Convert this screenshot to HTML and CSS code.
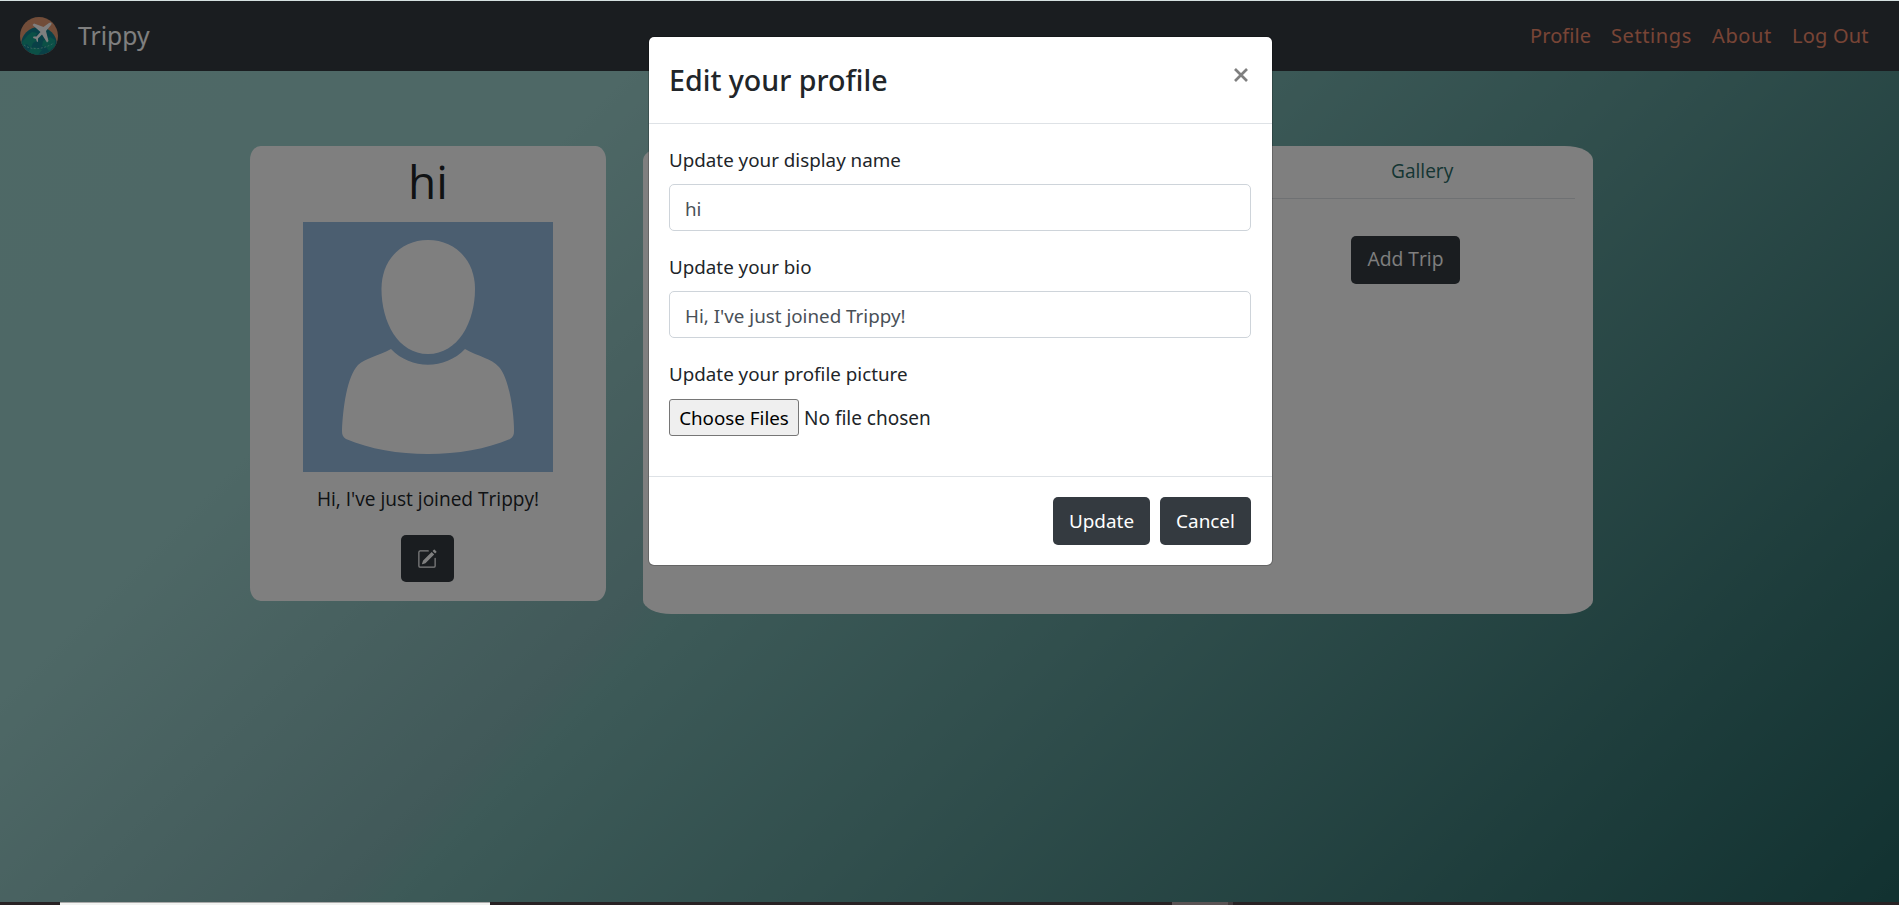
FILE: index.html
```html
<!DOCTYPE html>
<html lang="en">
<head>
<meta charset="utf-8">
<title>Trippy</title>
<link rel="stylesheet" href="styles.css">
</head>
<body>
<div class="page">
  <nav class="navbar">
    <svg class="logo" viewBox="0 0 38 38">
      <defs><clipPath id="disc"><circle cx="19" cy="19" r="19"/></clipPath></defs>
      <g clip-path="url(#disc)">
        <rect width="38" height="38" fill="#e49a72"/>
        <circle cx="19" cy="28" r="18" fill="#12808f"/>
        <path d="M8 18l4-3 5 1-2 4 3 3-5 3-2 5-4-4-4 2-1-4z" fill="#16a08c"/>
        <path d="M23 24l7-4 5 3v6l-6 5-3-4-4-1zM9 33l5-3 8 3-4 5h-7z" fill="#16a08c"/>
        <path d="M4 28c8 6 20 4 30-2" fill="none" stroke="#6cc6bc" stroke-width="1" stroke-dasharray="2 1.5"/>
        <path d="M29 6c2-1.500 3.500 0 2 2l-5 6 2.500 10-1.500 1.500-5-8-4 4v3l-1 .5-1-3-3-1 .5-1.500h3l4-4.500-8-7 1.500-1.500 9.500 3.500z" fill="#fff"/>
      </g>
    </svg>
    <span class="brand">Trippy</span>
    <div class="links">
      <a class="l1">Profile</a><a class="l2">Settings</a><a class="l3">About</a><a class="l4">Log Out</a>
    </div>
  </nav>
  <main class="content">
    <section class="profile">
      <h1 class="name">hi</h1>
      <svg class="avatar" viewBox="0 0 250 250">
        <rect width="250" height="250" fill="#97bce1"/>
        <path d="M125 18C152 18 172 38 172 67C172 100 155 132 125 132C95 132 78.500 100 78.500 67C78.500 38 98 18 125 18Z" fill="#fff"/>
        <path d="M88 127C108 148 142 148 162 127C176 135 188 136 196 145C206 156 211 190 211 209C211 213 210 215 207 217C160 237 90 237 43 217C40 215 39 213 39 209C40 185 44 155 55 143C63 136 75 134 88 127Z" fill="#fff"/>
      </svg>
      <p class="bio">Hi, I've just joined Trippy!</p>
      <button class="btn edit">
        <svg width="20" height="20" viewBox="0 0 16 16" fill="#fff"><path d="M15.502 1.940a.5.5 0 0 1 0 .706L14.459 3.690l-2-2L13.502.646a.5.5 0 0 1 .707 0l1.293 1.293zm-1.750 2.456l-2-2L4.939 9.210a.5.5 0 0 0-.121.196l-.805 2.414a.25.25 0 0 0 .316.316l2.414-.805a.5.5 0 0 0 .196-.120l6.813-6.814z"/><path fill-rule="evenodd" d="M1 13.500A1.500 1.500 0 0 0 2.500 15h11a1.500 1.500 0 0 0 1.500-1.500v-6a.5.5 0 0 0-1 0v6a.5.5 0 0 1-.5.5h-11a.5.5 0 0 1-.5-.5v-11a.5.5 0 0 1 .5-.5H9a.5.5 0 0 0 0-1H2.500A1.500 1.500 0 0 0 1 2.500v11z"/></svg>
      </button>
    </section>
    <section class="gallery">
      <div class="tabs"><a class="tab">Gallery</a></div>
      <button class="btn add">Add Trip</button>
    </section>
  </main>
  <div class="backdrop"></div>
  <div class="modal">
    <header class="modal-head">
      <h2 class="modal-title">Edit your profile</h2>
      <svg class="close" viewBox="0 0 14 14"><path d="M1 1l12 12M13 1L1 13" stroke="#7f7f7f" stroke-width="2.700"/></svg>
    </header>
    <div class="modal-body">
      <label>Update your display name</label>
      <div class="field">hi</div>
      <label>Update your bio</label>
      <div class="field">Hi, I've just joined Trippy!</div>
      <label>Update your profile picture</label>
      <div class="file"><span class="choose">Choose Files</span><span class="nofile">No file chosen</span></div>
    </div>
    <footer class="modal-foot">
      <button class="btn update">Update</button>
      <button class="btn cancel">Cancel</button>
    </footer>
  </div>
</div>
<div class="taskbar"><span class="task-white"></span><span class="task-gray"></span></div>
</body>
</html>
```
FILE: styles.css
```css
* { box-sizing: border-box; }
body { margin: 0; height: 905px; overflow: hidden; display: flex; flex-direction: column; font: 18.8px/30px "Noto Sans", sans-serif; color: #212529; }
h1, h2, p { margin: 0; }
.page { position: relative; height: 902px; border-top: 1px solid #d5e0e0; background: linear-gradient(135deg, #9cd2cd 0%, #9cd0cc 25%, #83b3b3 44%, #7ab4b0 46%, #246462 100%); }
.navbar { height: 70px; background: #343a40; display: flex; align-items: center; padding: 0 30px 0 20px; }
.logo { width: 38px; height: 38px; }
.brand { font: 24.7px/38px "Noto Sans", sans-serif; color: #fff; margin-left: 20px; }
.links { margin-left: auto; display: flex; gap: 20px; font: 20px/30px "Noto Sans", sans-serif; color: #f08a6c; }
.links a { white-space: nowrap; }
.l1 { width: 61px; letter-spacing: .1px; }
.l2 { width: 81px; letter-spacing: .6px; }
.l3 { width: 60px; letter-spacing: .6px; }
.l4 { width: 77px; letter-spacing: .2px; }
.content { display: flex; align-items: flex-start; gap: 37px; padding: 75px 0 0 250px; }
.profile { width: 356px; height: 455px; border-radius: 3%; background: #fff; display: flex; flex-direction: column; align-items: center; }
.name { font: 400 46px/60px "Open Sans", sans-serif; margin-top: 5px; height: 71px; }
.avatar { width: 250px; height: 250px; }
.bio { font: 19.1px/30px "Open Sans", sans-serif; margin-top: 12px; white-space: nowrap; }
.btn { border: 0; border-radius: 5px; background: #343a40; color: #fff; height: 48px; padding: 0; font: 18.9px/30px "Noto Sans", sans-serif; white-space: nowrap; }
.edit { width: 53px; height: 47px; margin: 21px 2px 0 0; display: flex; align-items: center; justify-content: center; }
.gallery { width: 950px; height: 468px; border-radius: 3%; background: #fff; padding: 0 18px; display: flex; flex-direction: column; }
.tabs { height: 53px; border-bottom: 1px solid #dee2e6; display: flex; justify-content: flex-end; padding: 10px 122px 0 0; }
.tab { color: #2a6b66; font: 19.1px/30px "Open Sans", sans-serif; width: 62px; white-space: nowrap; }
.add { width: 109px; margin: 37px 115px 0 auto; font: 19.3px/30px "Open Sans", sans-serif; padding-bottom: 2px; }
.backdrop { position: absolute; inset: 0; background: rgba(0,0,0,.5); }
.modal { position: absolute; left: 648px; top: 35px; width: 625px; height: 530px; border: 1px solid rgba(0,0,0,.2); background: #fff; background-clip: padding-box; border-radius: 6px; }
.modal-head { height: 87px; border-bottom: 1px solid #dee2e6; display: flex; justify-content: space-between; padding: 24px 24px 0 20px; }
.modal-title { font: 500 28.6px/38px "Noto Sans", sans-serif; white-space: nowrap; }
.close { width: 14px; height: 14px; margin-top: 7px; }
.modal-body { height: 353px; padding: 21px 21px 0 20px; border-bottom: 1px solid #dee2e6; display: flex; flex-direction: column; align-items: stretch; }
.modal-body label { height: 39px; white-space: nowrap; }
.field { height: 47px; margin-bottom: 21px; border: 1px solid #ced4da; border-radius: 5px; padding: 9px 15px 0; line-height: 30px; color: #495057; }
.file { display: flex; align-items: center; gap: 5px; height: 37px; margin-top: 1px; }
.choose { width: 130px; height: 37px; border: 1px solid #767676; border-radius: 3px; background: #efefef; color: #000; line-height: 37px; text-align: center; white-space: nowrap; }
.nofile { font-size: 19px; padding-top: 1px; white-space: nowrap; }
.modal-foot { display: flex; justify-content: flex-end; gap: 10px; padding: 20px 21px 20px 20px; }
.update { width: 97px; }
.cancel { width: 91px; }
.taskbar { height: 3px; background: #282224; display: flex; }
.task-white { width: 430px; margin-left: 60px; background: #f2f3f1; border-top: 1px solid #aaa; }
.task-gray { width: 61px; margin-left: 682px; background: #5a5354; border-right: 5px solid #423c3d; }
```
